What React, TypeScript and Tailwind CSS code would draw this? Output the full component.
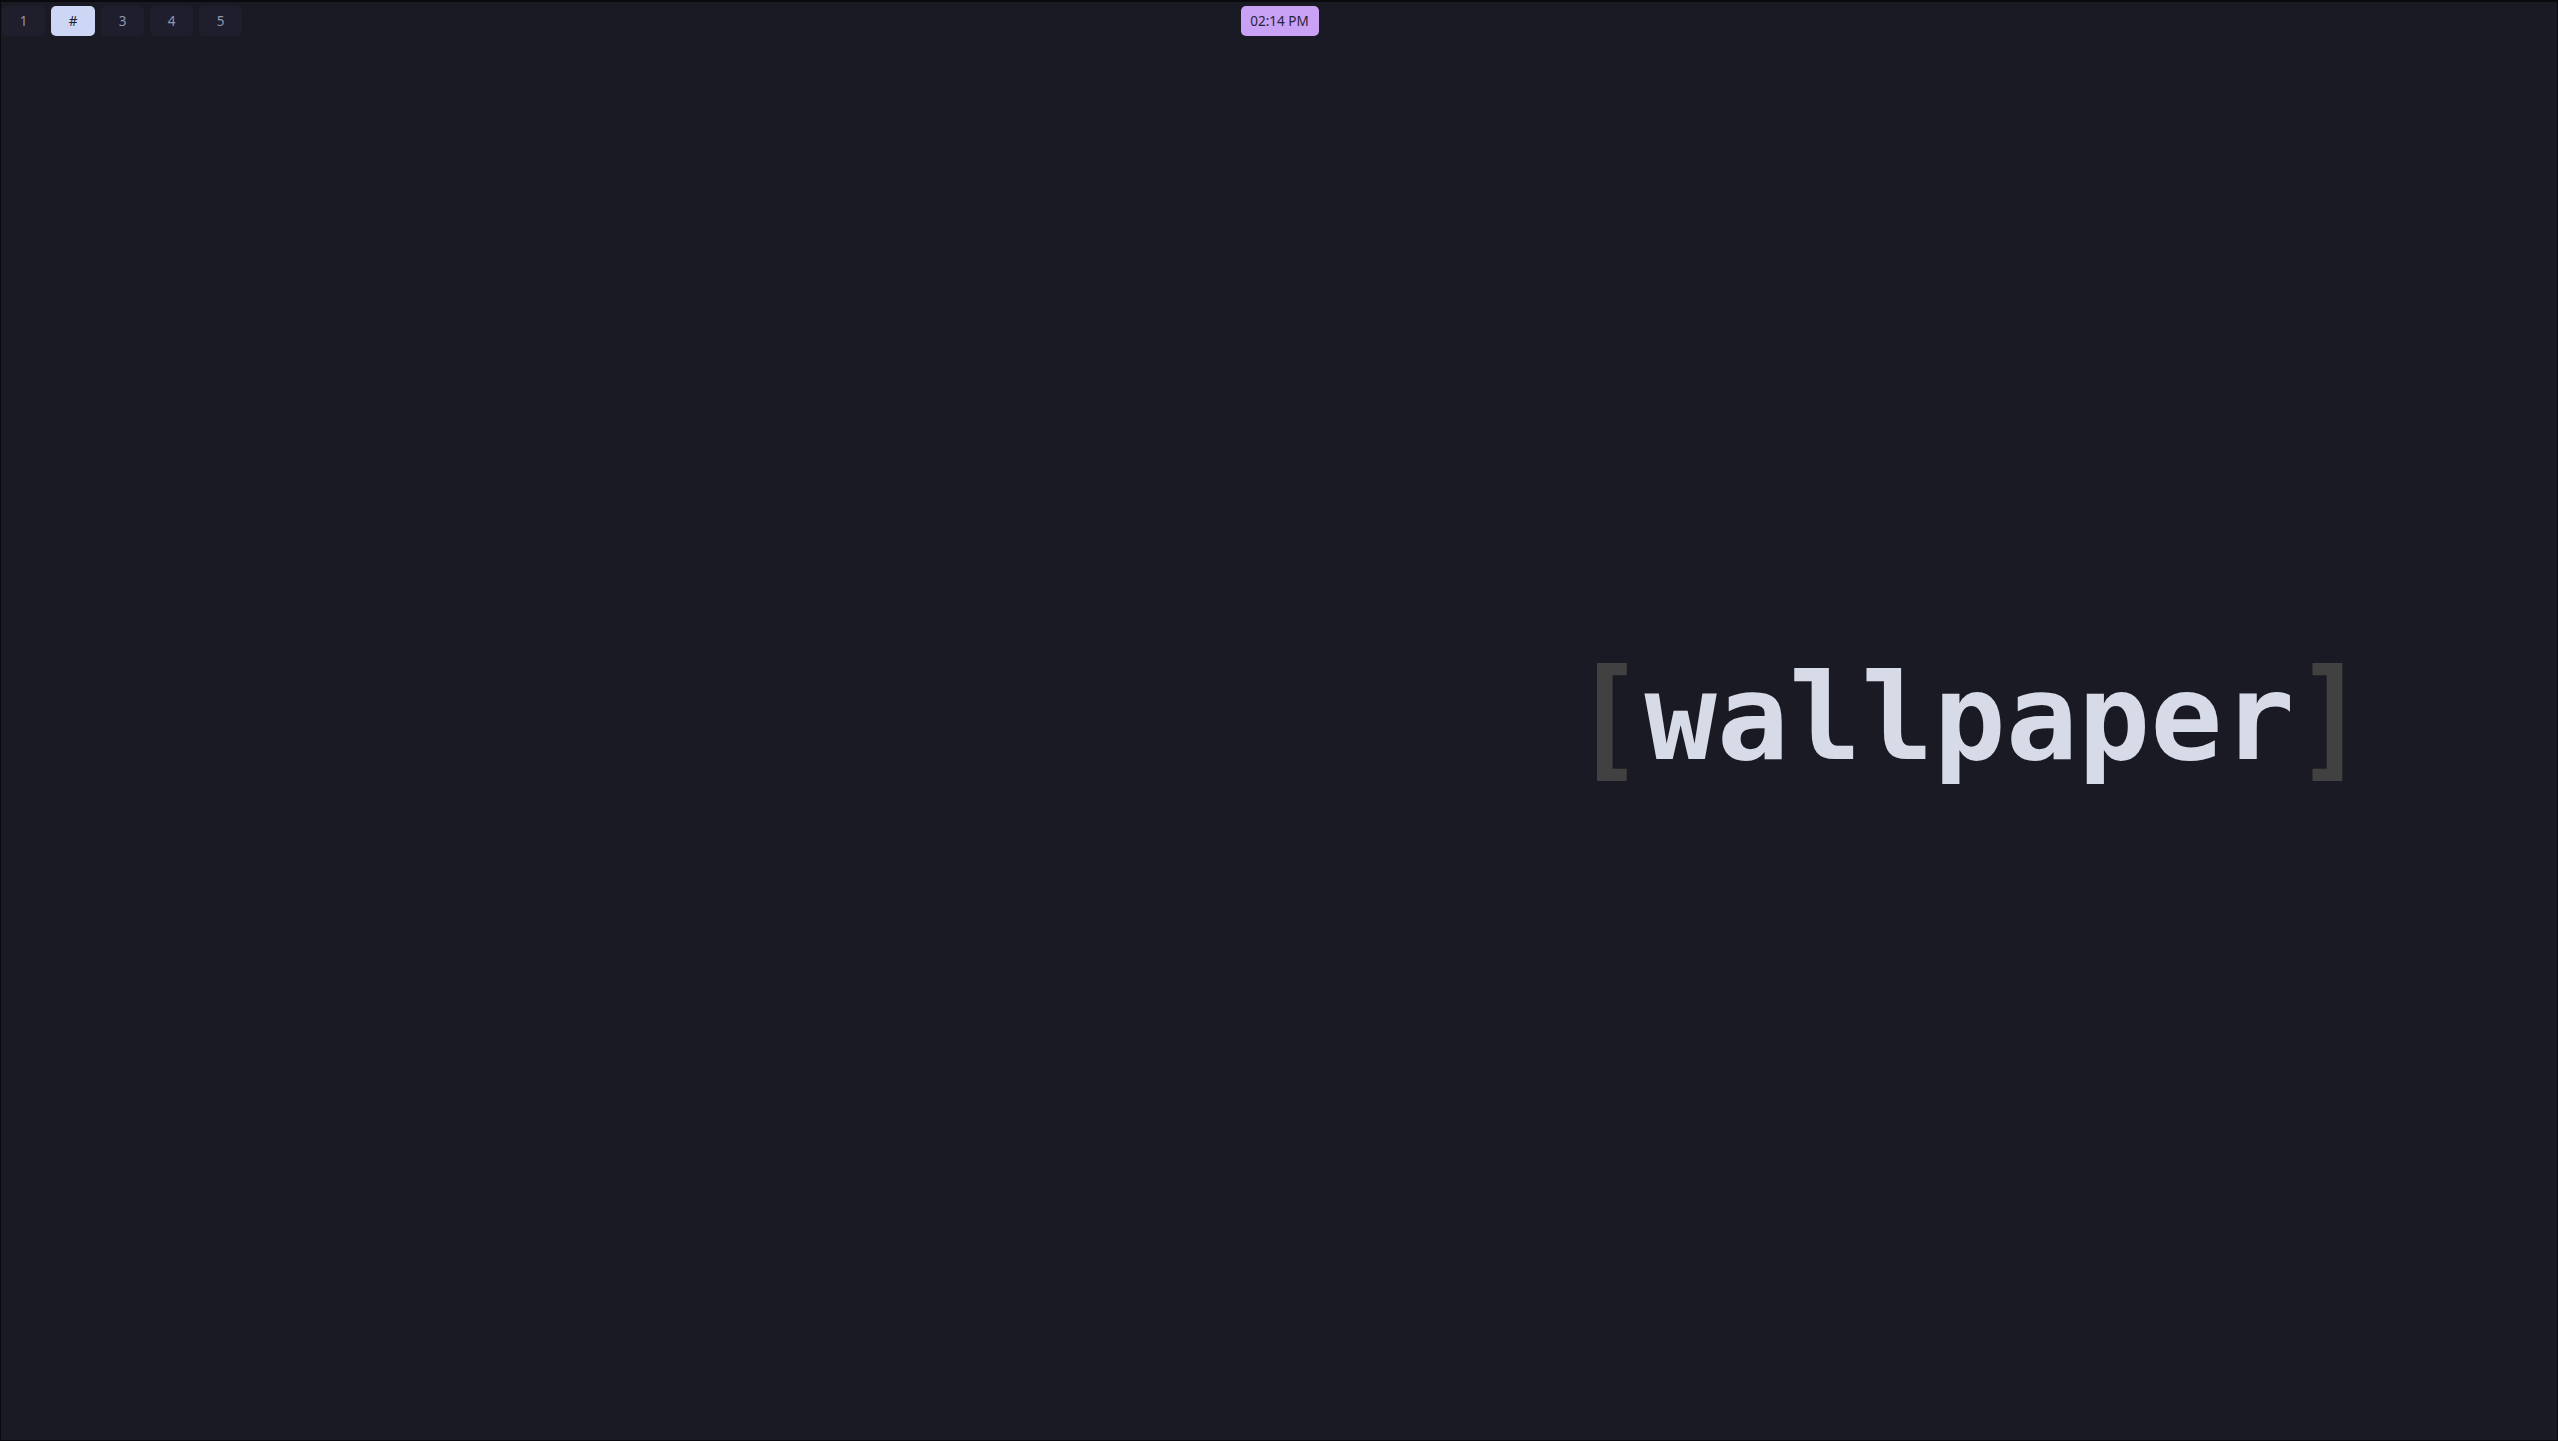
import React from "react";

const workspaces = ["1", "#", "3", "4", "5"];

const WorkspaceButton: React.FC<{ label: string; active?: boolean }> = ({ label, active }) => {
  return (
    <div
      className={
        active
          ? "flex h-[30px] w-[44px] items-center justify-center rounded-[5px] bg-[#cdd6f4] text-[#1e1e2e]"
          : "flex h-[30px] w-[43px] items-center justify-center rounded-[5px] bg-[#1e1e2d] text-[#9297ad]"
      }
    >
      {label}
    </div>
  );
};

export default function App() {
  return (
    <div className="flex h-[1441px] w-[2558px] flex-col overflow-hidden border-x border-t-2 border-b border-[#0a0a0e] bg-[#1a1a25] font-['Noto_Sans',sans-serif] text-[13.5px]">
      <div className="grid grid-cols-[1fr_auto_1fr] items-center pt-[4px] pl-[1px]">
        <div className="flex gap-[6px]">
          {workspaces.map((w) => (
            <WorkspaceButton key={w} label={w} active={w === "#"} />
          ))}
        </div>
        <div className="flex h-[30px] w-[78px] items-center justify-center rounded-[5px] bg-[#c9a2f6] text-[#2a2238]">
          02:14 PM
        </div>
        <div />
      </div>

      <div className="flex flex-1 items-center justify-end pr-[190px] pb-[40px]">
        <div className="flex items-center font-['DejaVu_Sans_Mono',monospace] text-[120px] leading-none font-bold">
          <span className="inline-block scale-y-[1.1] text-[#414141]">[</span>
          <span className="text-[#d6dbe7]">wallpaper</span>
          <span className="inline-block scale-y-[1.1] text-[#414141]">]</span>
        </div>
      </div>
    </div>
  );
}
